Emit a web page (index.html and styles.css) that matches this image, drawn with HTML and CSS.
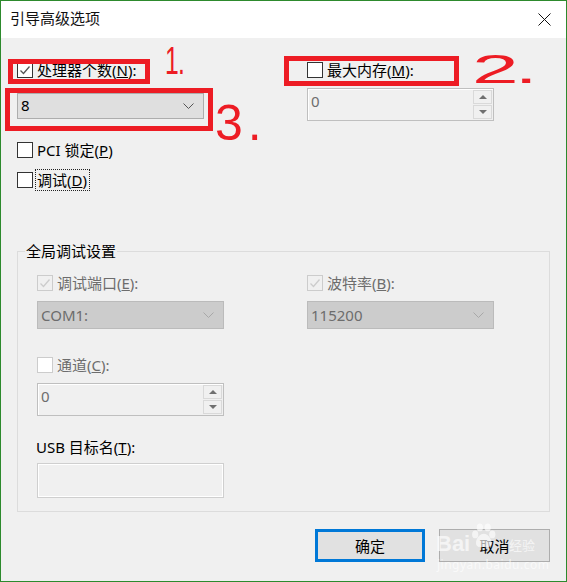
FILE: index.html
```html
<!DOCTYPE html>
<html lang="zh-CN">
<head>
	<meta charset="UTF-8">
	<title>引导高级选项</title>
	<link rel="stylesheet" href="styles.css">
</head>
<body>

<div class="dialog">
	<div class="titlebar">
		<span class="title">引导高级选项</span>
		<svg class="close" width="13" height="13" viewBox="0 0 13 13"><path d="M.5.5l12 12M12.5.5l-12 12" stroke="#111" fill="none"/></svg>
	</div>

	<div class="main">
		<div class="top">
			<div class="col">
				<label class="check">
					<span class="box on"><svg width="14" height="14" viewBox="0 0 14 14"><path d="M2.5 7.5l3 3 6-7" stroke="#555" stroke-width="1.3" fill="none"/></svg></span>
					<span>处理器个数(<u>N</u>):</span>
				</label>
				<div class="combo combo-main"><span>8</span><svg class="chev" width="11" height="6" viewBox="0 0 11 6"><path d="M.5.5l5 5 5-5" stroke="#555" fill="none"/></svg></div>
				<label class="check pci"><span class="box"></span><span>PCI 锁定(<u>P</u>)</span></label>
				<label class="check debug"><span class="box"></span><span class="focus">调试(<u>D</u>)</span></label>
			</div>
			<div class="col">
				<label class="check"><span class="box"></span><span>最大内存(<u>M</u>):</span></label>
				<div class="spin spin-top">
					<span class="val">0</span>
					<div class="arrows">
						<span class="arrow"><i class="up"></i></span>
						<span class="arrow"><i class="down"></i></span>
					</div>
				</div>
			</div>
		</div>

		<div class="group">
			<span class="legend">全局调试设置</span>
			<div class="group-grid">
				<div class="col">
					<label class="check off">
						<span class="box on-off"><svg width="14" height="14" viewBox="0 0 14 14"><path d="M2.5 7.5l3 3 6-7" stroke="#ccc" stroke-width="1.3" fill="none"/></svg></span>
						<span>调试端口(<u>E</u>):</span>
					</label>
					<div class="combo combo-off"><span>COM1:</span><svg class="chev" width="11" height="6" viewBox="0 0 11 6"><path d="M.5.5l5 5 5-5" stroke="#a8a8a8" fill="none"/></svg></div>
				</div>
				<div class="col">
					<label class="check off">
						<span class="box on-off"><svg width="14" height="14" viewBox="0 0 14 14"><path d="M2.5 7.5l3 3 6-7" stroke="#ccc" stroke-width="1.3" fill="none"/></svg></span>
						<span>波特率(<u>B</u>):</span>
					</label>
					<div class="combo combo-off"><span>115200</span><svg class="chev" width="11" height="6" viewBox="0 0 11 6"><path d="M.5.5l5 5 5-5" stroke="#a8a8a8" fill="none"/></svg></div>
				</div>
			</div>
			<label class="check off channel"><span class="box box-off"></span><span>通道(<u>C</u>):</span></label>
			<div class="spin spin-channel">
				<span class="val">0</span>
				<div class="arrows">
					<span class="arrow"><i class="up"></i></span>
					<span class="arrow"><i class="down"></i></span>
				</div>
			</div>
			<div class="usb-label">USB 目标名(<u>T</u>):</div>
			<div class="usb-input"></div>
		</div>

		<div class="buttons">
			<button class="btn btn-ok">确定</button>
			<button class="btn">取消</button>
		</div>
	</div>

	<!-- red marks drawn over the screenshot -->
	<div class="mark mark-1"></div>
	<div class="mark mark-2"></div>
	<div class="mark mark-3"></div>
	<span class="num num-1">1.</span>
	<span class="num num-2">2.</span>
	<span class="num num-3">3.</span>

	<!-- watermark -->
	<div class="wm">
		<svg class="paw" width="28" height="30" viewBox="0 0 36 34" fill="#fff">
			<ellipse cx="8" cy="15" rx="4" ry="5"/>
			<ellipse cx="14" cy="6" rx="4" ry="5"/>
			<ellipse cx="24" cy="6" rx="4" ry="5"/>
			<ellipse cx="30" cy="15" rx="4" ry="5"/>
			<path d="M19 14c6 0 10 7 10 12 0 5-5 6-10 5-5 1-10 0-10-5 0-5 4-12 10-12z"/>
		</svg>
		<span class="wm-brand">Bai</span>
		<span class="wm-jy">经验</span>
		<span class="wm-url">jingyan.baidu.com</span>
	</div>
</div>

</body>
</html>
```

FILE: styles.css
```css
* {
	margin: 0;
	padding: 0;
	box-sizing: border-box;
}

body {
	font-family: "Noto Sans", "Noto Sans CJK SC", sans-serif;
	font-size: 15px;
	color: #000;
	background: #f0f0f0;
}

.dialog {
	position: relative;
	width: 567px;
	height: 582px;
	border: 1px solid #2d8a2d;
	background: #f0f0f0;
	overflow: hidden;
}

/*title*/
.titlebar {
	display: flex;
	align-items: center;
	justify-content: space-between;
	height: 37px;
	padding: 0 15px 0 9px;
	background: #fff;
}

.title {
	margin-bottom: 4px;
	font-size: 15px;
	color: #111;
}

.main {
	padding-left: 16px;
}

.top {
	display: grid;
	grid-template-columns: 290px 190px;
	padding-top: 24px;
}

.col {
	display: flex;
	flex-direction: column;
}

/*checkbox*/
.check {
	display: flex;
	align-items: center;
	gap: 4px;
	height: 16px;
	line-height: 16px;
	white-space: nowrap;
}

.box {
	display: flex;
	align-items: center;
	justify-content: center;
	width: 16px;
	height: 16px;
	flex: none;
	border: 1px solid #333;
	background: #fff;
}

.box.on-off {
	border-color: #ccc;
	background: #f0f0f0;
}

.box.box-off {
	border-color: #ccc;
}

.check.off {
	color: #6d6d6d;
}

.pci {
	margin-top: 23px;
}

.debug {
	margin-top: 14px;
}

.focus {
	padding: 1px 2px 1px 1px;
	margin-left: -1px;
	line-height: 18px;
	outline: 1px dotted #222;
}

/*combobox*/
.combo {
	display: flex;
	align-items: center;
	justify-content: space-between;
	width: 187px;
	padding: 0 9px 0 3px;
}

.combo-main {
	height: 26px;
	margin-top: 15px;
	background: #dfdfdf;
	border: 1px solid #adadad;
}

.combo-main span {
	margin-bottom: 2px;
}

.combo-off {
	height: 28px;
	margin-top: 10px;
	background: #cccccc;
	border: 1px solid #bbbbbb;
	color: #6d6d6d;
}

/*spinner*/
.spin {
	display: flex;
	align-items: center;
	justify-content: space-between;
	width: 187px;
	height: 33px;
	padding: 0 1px 0 3px;
	background: #f0f0f0;
	border: 1px solid #bfbfbf;
	box-shadow: inset 1px 1px 0 #fff;
	color: #6d6d6d;
}

.spin-top {
	margin-top: 10px;
}

.val {
	margin-bottom: 8px;
	font-size: 15px;
}

.arrows {
	display: flex;
	flex-direction: column;
	gap: 1px;
}

.arrow {
	display: flex;
	align-items: center;
	justify-content: center;
	width: 19px;
	height: 14px;
	border: 1px solid #d9d9d9;
	background: #f0f0f0;
}

.arrow i {
	width: 0;
	height: 0;
	border-left: 4px solid transparent;
	border-right: 4px solid transparent;
}

.arrow .up {
	border-bottom: 4px solid #707070;
}

.arrow .down {
	border-top: 4px solid #707070;
}

/*group*/
.group {
	position: relative;
	width: 533px;
	height: 261px;
	margin-top: 63px;
	padding: 23px 0 0 19px;
	border: 1px solid #dcdcdc;
}

.legend {
	position: absolute;
	left: 7px;
	top: -10px;
	padding: 0 1px;
	line-height: 18px;
	background: #f0f0f0;
}

.group-grid {
	display: grid;
	grid-template-columns: 270px 190px;
}

.channel {
	margin-top: 28px;
}

.spin-channel {
	margin-top: 10px;
}

.usb-label {
	height: 20px;
	line-height: 20px;
	margin-top: 21px;
	margin-left: -1px;
}

.usb-input {
	width: 187px;
	height: 35px;
	margin-top: 6px;
	background: #f0f0f0;
	border: 1px solid #cfcfcf;
	box-shadow: inset 1px 1px 0 #fff, inset -1px -1px 0 #fff;
}

/*buttons*/
.buttons {
	display: flex;
	justify-content: flex-end;
	gap: 14px;
	width: 533px;
	margin-top: 17px;
}

.btn {
	width: 111px;
	height: 33px;
	font: inherit;
	color: #000;
	background: #e1e1e1;
	border: 1px solid #adadad;
}

.btn-ok {
	width: 110px;
	border: 3px solid #0078d7;
}

/*red marks*/
.mark {
	position: absolute;
	border: 5px solid #ed1c24;
}

.mark-1 {
	left: 7px;
	top: 58px;
	width: 142px;
	height: 25px;
}

.mark-2 {
	left: 283px;
	top: 55px;
	width: 175px;
	height: 30px;
}

.mark-3 {
	left: 4px;
	top: 87px;
	width: 208px;
	height: 43px;
}

.num {
	position: absolute;
	font-family: "Liberation Sans", sans-serif;
	color: #ed1c24;
	line-height: 1;
	white-space: nowrap;
	transform-origin: 0 0;
}

.num-1 {
	left: 164px;
	top: 41px;
	font-size: 38px;
	letter-spacing: -1px;
	transform: scaleX(0.65);
}

.num-2 {
	left: 471px;
	top: 48px;
	font-size: 40px;
	letter-spacing: -2px;
	transform: scaleX(2.1);
}

.num-3 {
	left: 214px;
	top: 97px;
	font-size: 50px;
	letter-spacing: 5px;
}

/*watermark*/
.wm {
	position: absolute;
	left: 435px;
	top: 518px;
	width: 102px;
	height: 56px;
	color: #fff;
	opacity: 0.65;
}

.paw {
	position: absolute;
	left: 33px;
	top: 2px;
}

.wm-brand {
	position: absolute;
	left: 0;
	top: 12px;
	font-family: "Liberation Sans", sans-serif;
	font-size: 22px;
	font-weight: bold;
	line-height: 26px;
}

.wm-jy {
	position: absolute;
	left: 73px;
	top: 16px;
	font-size: 13px;
	line-height: 20px;
}

.wm-url {
	position: absolute;
	left: 1px;
	top: 38px;
	font-size: 12px;
	line-height: 16px;
	letter-spacing: 0.5px;
}
```
